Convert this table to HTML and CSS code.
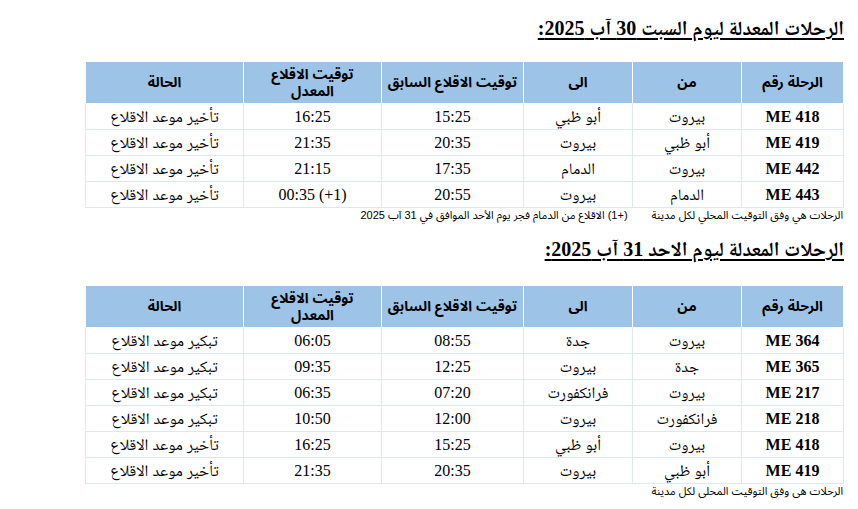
FILE: index.html
```html
<!DOCTYPE html>
<html lang="ar" dir="rtl">
<head>
<meta charset="utf-8">
<title>الرحلات المعدلة</title>
<link rel="stylesheet" href="styles.css">
</head>
<body>
<div class="page">
  <h2 class="title">الرحلات المعدلة ليوم السبت 30 آب 2025:</h2>
  <table class="flights">
    <colgroup>
      <col class="c-no"><col class="c-from"><col class="c-to"><col class="c-prev"><col class="c-new"><col class="c-status">
    </colgroup>
    <thead>
      <tr><th>الرحلة رقم</th><th>من</th><th>الى</th><th>توقيت الاقلاع السابق</th><th class="wrap">توقيت الاقلاع المعدل</th><th>الحالة</th></tr>
    </thead>
    <tbody>
      <tr><td class="no">ME 418</td><td>بيروت</td><td>أبو ظبي</td><td>15:25</td><td>16:25</td><td>تأخير موعد الاقلاع</td></tr>
      <tr><td class="no">ME 419</td><td>أبو ظبي</td><td>بيروت</td><td>20:35</td><td>21:35</td><td>تأخير موعد الاقلاع</td></tr>
      <tr><td class="no">ME 442</td><td>بيروت</td><td>الدمام</td><td>17:35</td><td>21:15</td><td>تأخير موعد الاقلاع</td></tr>
      <tr><td class="no">ME 443</td><td>الدمام</td><td>بيروت</td><td>20:55</td><td><span dir="ltr">00:35 (+1)</span></td><td>تأخير موعد الاقلاع</td></tr>
    </tbody>
  </table>
  <p class="note"><span class="note-a">الرحلات هي وفق التوقيت المحلي لكل مدينة</span><span>(+1) الاقلاع من الدمام فجر يوم الأحد الموافق في 31 آب 2025</span></p>

  <h2 class="title second">الرحلات المعدلة ليوم الاحد 31 آب 2025:</h2>
  <table class="flights">
    <colgroup>
      <col class="c-no"><col class="c-from"><col class="c-to"><col class="c-prev"><col class="c-new"><col class="c-status">
    </colgroup>
    <thead>
      <tr><th>الرحلة رقم</th><th>من</th><th>الى</th><th>توقيت الاقلاع السابق</th><th class="wrap">توقيت الاقلاع المعدل</th><th>الحالة</th></tr>
    </thead>
    <tbody>
      <tr><td class="no">ME 364</td><td>بيروت</td><td>جدة</td><td>08:55</td><td>06:05</td><td>تبكير موعد الاقلاع</td></tr>
      <tr><td class="no">ME 365</td><td>جدة</td><td>بيروت</td><td>12:25</td><td>09:35</td><td>تبكير موعد الاقلاع</td></tr>
      <tr><td class="no">ME 217</td><td>بيروت</td><td>فرانكفورت</td><td>07:20</td><td>06:35</td><td>تبكير موعد الاقلاع</td></tr>
      <tr><td class="no">ME 218</td><td>فرانكفورت</td><td>بيروت</td><td>12:00</td><td>10:50</td><td>تبكير موعد الاقلاع</td></tr>
      <tr><td class="no">ME 418</td><td>بيروت</td><td>أبو ظبي</td><td>15:25</td><td>16:25</td><td>تأخير موعد الاقلاع</td></tr>
      <tr><td class="no">ME 419</td><td>أبو ظبي</td><td>بيروت</td><td>20:35</td><td>21:35</td><td>تأخير موعد الاقلاع</td></tr>
    </tbody>
  </table>
  <p class="note"><span>الرحلات هي وفق التوقيت المحلي لكل مدينة</span></p>
</div>
</body>
</html>
```
FILE: styles.css
```css
html, body {
  margin: 0;
  padding: 0;
  background: #ffffff;
}
body {
  direction: rtl;
  font-family: "Liberation Serif", "Noto Naskh Arabic", "Noto Sans Arabic", "DejaVu Sans", serif;
  color: #000000;
}
.page {
  width: 758px;
  margin-right: 14px;
  padding-top: 16px;
}
.title {
  margin: 0 0 21px 0;
  font-size: 20px;
  line-height: 24px;
  font-weight: bold;
  text-decoration: underline;
  text-decoration-thickness: 2px;
  text-underline-offset: 3px;
  text-align: right;
}
.title.second {
  margin-top: 15px;
  margin-bottom: 24px;
}
.flights {
  width: 758px;
  table-layout: fixed;
  border-collapse: collapse;
}
.c-no { width: 102px; }
.c-from { width: 109px; }
.c-to { width: 109px; }
.c-prev { width: 142px; }
.c-new { width: 138px; }
.c-status { width: 158px; }
.flights th {
  background: #9dc3e6;
  border: 1px solid #ffffff;
  height: 41px;
  padding: 0 2px;
  font-family: "Liberation Sans", "Noto Sans Arabic", "DejaVu Sans", sans-serif;
  font-weight: bold;
  font-size: 14px;
  line-height: 17px;
  text-align: center;
  vertical-align: middle;
  white-space: nowrap;
}
.flights th.wrap {
  white-space: normal;
  padding: 0 12px;
}
.flights td {
  border: 1px solid #dce8f5;
  height: 25px;
  padding: 0;
  font-size: 16px;
  line-height: 18px;
  text-align: center;
  vertical-align: middle;
}
.flights td.no {
  font-weight: bold;
}
.note {
  margin: 0;
  font-family: "Liberation Sans", "Noto Sans Arabic", "DejaVu Sans", sans-serif;
  font-size: 11px;
  line-height: 14px;
  text-align: right;
  padding-right: 1px;
  white-space: nowrap;
}
.note-a {
  margin-left: 24px;
}
```
